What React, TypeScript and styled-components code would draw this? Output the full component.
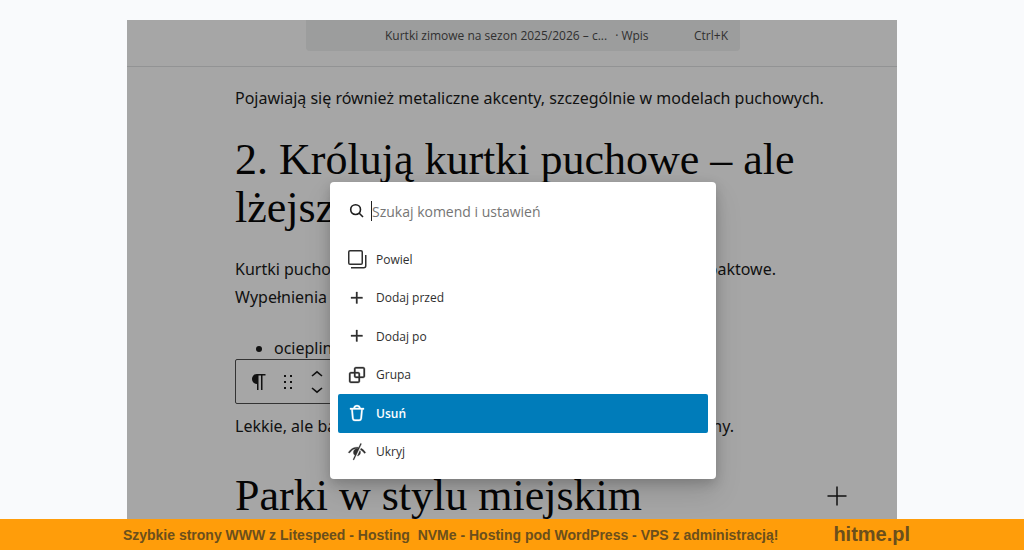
import React from "react";
import styled, { createGlobalStyle, css } from "styled-components";

const uiFont = '"Open Sans", "Noto Sans", sans-serif';
const contentFont = '"Noto Sans", "Open Sans", sans-serif';

const GlobalStyle = createGlobalStyle`
  *, *::before, *::after { box-sizing: border-box; }
  body { margin: 0; background: #f9fafc; font-family: ${uiFont}; }
  h2, h3, p, ul { margin: 0; padding: 0; font-weight: 400; }
  button, input { font: inherit; color: inherit; }
`;

const Page = styled.div`
  display: flex;
  flex-direction: column;
  height: 100vh;
  overflow: hidden;
`;

const Stage = styled.main`
  flex: 1;
  min-height: 0;
  display: flex;
  justify-content: center;
  padding-top: 20px;
`;

const Editor = styled.section`
  position: relative;
  width: 100%;
  max-width: 770px;
  overflow: hidden;
  background: #a6a6a6;
  color: #111;
`;

const TopBar = styled.header`
  display: flex;
  justify-content: center;
  align-items: flex-start;
  height: 47px;
  padding-left: 22px;
  border-bottom: 1px solid #929394;
`;

const DocumentButton = styled.button`
  display: flex;
  align-items: center;
  width: 434px;
  height: 31px;
  padding: 0 12px 0 79px;
  border: 0;
  border-radius: 0 0 4px 4px;
  background: #9c9d9d;
  color: #303030;
  font-size: 12px;
`;

const DocumentType = styled.span`
  margin-left: 8px;
`;

const Shortcut = styled.span`
  margin-left: auto;
`;

const Content = styled.article`
  padding: 17px 50px 0 108px;
  font-family: ${contentFont};
`;

const Paragraph = styled.p`
  font-size: 16px;
  line-height: 28px;
  white-space: nowrap;
`;

const SplitLine = styled.span<{ $width: number }>`
  display: flex;
  justify-content: space-between;
  max-width: ${(p) => p.$width}px;
`;

const headingText = css`
  color: #050505;
  font-family: "Liberation Serif", serif;
  font-size: 44px;
  line-height: 48px;
  white-space: nowrap;
`;

const Heading = styled.h2`
  ${headingText}
  margin: 24px 0 23px;
`;

const HeadingRow = styled.div`
  display: flex;
  align-items: center;
  justify-content: space-between;
  margin-top: 32px;
`;

const SubHeading = styled.h3`
  ${headingText}
`;

const Bullets = styled.ul`
  margin-top: 23px;
  padding-left: 39px;
  font-size: 16px;
  line-height: 28px;
`;

const BlockToolbar = styled.div`
  display: flex;
  align-items: center;
  width: 300px;
  height: 45px;
  margin: -3px 0 8px;
  padding-left: 11px;
  gap: 5px;
  border: 1px solid #333;
  border-radius: 2px;
`;

const IconButton = styled.button`
  display: flex;
  padding: 0;
  border: 0;
  background: none;
`;

const Movers = styled.div`
  display: flex;
  flex-direction: column;
`;

const Palette = styled.div`
  position: absolute;
  top: 162px;
  left: 203px;
  width: 386px;
  padding: 0 8px 8px;
  border-radius: 4px;
  background: #fff;
  color: #2f2f2f;
  box-shadow: 0 4px 12px rgba(0, 0, 0, 0.18), 0 14px 28px rgba(0, 0, 0, 0.12);
`;

const SearchField = styled.label`
  display: flex;
  align-items: center;
  gap: 2px;
  height: 58px;
  padding: 0 7px;
  color: #1e1e1e;
`;

const SearchInput = styled.input`
  flex: 1;
  height: 20px;
  padding: 0;
  border: 0;
  border-left: 1px solid #222;
  outline: 0;
  background: none;
  font-size: 14px;
  &::placeholder { color: #757575; opacity: 1; }
`;

const Commands = styled.ul`
  display: grid;
  grid-auto-rows: 1fr;
  height: 231px;
  list-style: none;
`;

const Command = styled.button<{ $active?: boolean }>`
  display: flex;
  align-items: center;
  gap: 7px;
  width: 100%;
  height: 100%;
  padding: 0 7px;
  border: 0;
  border-radius: 2px;
  background: ${(p) => (p.$active ? "#007cba" : "none")};
  color: ${(p) => (p.$active ? "#fff" : "#2f2f2f")};
  font-size: 12px;
  font-weight: ${(p) => (p.$active ? 600 : 400)};
`;

const Promo = styled.footer`
  display: flex;
  align-items: center;
  gap: 55px;
  height: 31px;
  padding-left: 12%;
  background: #ff9d0a;
  color: #6b4f1c;
  font-family: "Liberation Sans", sans-serif;
  font-weight: 700;
  white-space: pre;
`;

const PromoText = styled.span`
  font-size: 14px;
`;

const PromoLink = styled.a`
  color: inherit;
  font-size: 20px;
  text-decoration: none;
`;

const paths = {
  copy: "M5 4.5h11a.5.5 0 0 1 .5.5v11a.5.5 0 0 1-.5.5H5a.5.5 0 0 1-.5-.5V5a.5.5 0 0 1 .5-.5ZM3 5a2 2 0 0 1 2-2h11a2 2 0 0 1 2 2v11a2 2 0 0 1-2 2H5a2 2 0 0 1-2-2V5Zm17 3v10.75c0 .69-.56 1.25-1.25 1.25H6v1.5h12.75a2.75 2.75 0 0 0 2.75-2.75V8H20Z",
  plus: "M11 12.5V17.5H12.5V12.5H17.5V11H12.5V6H11V11H6V12.5H11Z",
  group: "M18 4h-7c-1.1 0-2 .9-2 2v3H6c-1.1 0-2 .9-2 2v7c0 1.1.9 2 2 2h7c1.1 0 2-.9 2-2v-3h3c1.1 0 2-.9 2-2V6c0-1.1-.9-2-2-2zm-4.5 14c0 .3-.2.5-.5.5H6c-.3 0-.5-.2-.5-.5v-7c0-.3.2-.5.5-.5h3V13c0 1.1.9 2 2 2h2.5v3zm0-4.5H11c-.3 0-.5-.2-.5-.5v-2.5H13c.3 0 .5.2.5.5v2.5zm5-.5c0 .3-.2.5-.5.5h-3V11c0-1.1-.9-2-2-2h-2.5V6c0-.3.2-.5.5-.5h7c.3 0 .5.2.5.5v7z",
  trash: "M12 5.5A2.25 2.25 0 0 0 9.878 7h4.244A2.251 2.251 0 0 0 12 5.5ZM12 4a3.751 3.751 0 0 0-3.675 3H5v1.5h1.27l.818 8.997a2.75 2.75 0 0 0 2.739 2.501h4.347a2.75 2.75 0 0 0 2.738-2.5L17.73 8.5H19V7h-3.325A3.751 3.751 0 0 0 12 4Zm4.224 4.5H7.776l.806 8.861a1.25 1.25 0 0 0 1.245 1.137h4.347a1.25 1.25 0 0 0 1.245-1.137l.805-8.861Z",
  hide: "M20.7 12.7s0-.1-.1-.2c0-.2-.2-.4-.4-.6-.3-.5-.9-1.2-1.6-1.8-.7-.6-1.5-1.3-2.6-1.8l-.6 1.4c.9.4 1.6 1 2.1 1.5.6.6 1.1 1.2 1.4 1.6.1.2.3.4.3.5v.1l.7-.3.7-.3Zm-5.2-9.3-1.8 4c-.5-.1-1.1-.2-1.7-.2-3 0-5.2 1.4-6.6 2.7-.7.7-1.2 1.3-1.6 1.8-.2.3-.3.5-.4.6 0 0 0 .1-.1.2s0 0 .7.3l.7.3V13c0-.1.2-.3.3-.5.3-.4.7-1 1.4-1.6 1.2-1.2 3-2.3 5.5-2.3H13v.3c-.4 0-.8-.1-1.1-.1-1.9 0-3.5 1.6-3.5 3.5s.6 2.3 1.6 2.9l-2 4.4.9.4 7.6-16.2-.9-.4Zm-3 12.6c1.7-.2 3-1.7 3-3.5s-.2-1.4-.6-1.9L12.4 16Z",
  pilcrow: "m9.996 14v-.225l.004 0v6.225h1.5v-14.5h2.5v14.5h1.5v-14.5h3v-1.5h-8.504c-2.761 0-5 2.239-5 5 0 2.761 2.239 5 5 5z",
  drag: "M8 7h2V5H8v2zm0 6h2v-2H8v2zm0 6h2v-2H8v2zm6-14v2h2V5h-2zm0 8h2v-2h-2v2zm0 6h2v-2h-2v2z",
};

type IconName = keyof typeof paths;

const outlined: IconName[] = ["hide", "trash", "group", "plus"];

function Icon({ name }: { name: IconName }) {
  return (
    <svg
      width="24"
      height="24"
      viewBox="0 0 24 24"
      fill="currentColor"
      stroke={outlined.includes(name) ? "currentColor" : "none"}
      strokeWidth="0.3"
      fillRule="evenodd"
      aria-hidden="true"
    >
      <path d={paths[name]} />
    </svg>
  );
}

function Chevron({ down = false }: { down?: boolean }) {
  return (
    <svg width="24" height="16" viewBox="0 0 24 16" fill="none" stroke="currentColor" strokeWidth="1.6" aria-hidden="true">
      <path d={down ? "M7 6l5 4.2L17 6" : "M7 10l5-4.2L17 10"} />
    </svg>
  );
}

const commands: { label: string; icon: IconName; active?: boolean }[] = [
  { label: "Powiel", icon: "copy" },
  { label: "Dodaj przed", icon: "plus" },
  { label: "Dodaj po", icon: "plus" },
  { label: "Grupa", icon: "group" },
  { label: "Usuń", icon: "trash", active: true },
  { label: "Ukryj", icon: "hide" },
];

export default function App() {
  return (
    <Page>
      <GlobalStyle />
      <Stage>
        <Editor>
          <TopBar>
            <DocumentButton>
              <span>Kurtki zimowe na sezon 2025/2026 – c...</span>
              <DocumentType>· Wpis</DocumentType>
              <Shortcut>Ctrl+K</Shortcut>
            </DocumentButton>
          </TopBar>
          <Content>
            <Paragraph>Pojawiają się również metaliczne akcenty, szczególnie w modelach puchowych.</Paragraph>
            <Heading>
              2. Królują kurtki puchowe – ale
              <br />
              lżejsze
            </Heading>
            <Paragraph>
              <SplitLine $width={541}>
                <span>Kurtki puchowe</span>
                <span>kompaktowe.</span>
              </SplitLine>
              Wypełnienia
            </Paragraph>
            <Bullets>
              <li>ociepliny</li>
            </Bullets>
            <BlockToolbar role="toolbar">
              <IconButton aria-label="Akapit"><Icon name="pilcrow" /></IconButton>
              <IconButton aria-label="Przeciągnij"><Icon name="drag" /></IconButton>
              <Movers>
                <IconButton aria-label="W górę"><Chevron /></IconButton>
                <IconButton aria-label="W dół"><Chevron down /></IconButton>
              </Movers>
            </BlockToolbar>
            <Paragraph>
              <SplitLine $width={499}>
                <span>Lekkie, ale bardzo</span>
                <span>ny.</span>
              </SplitLine>
            </Paragraph>
            <HeadingRow>
              <SubHeading>Parki w stylu miejskim</SubHeading>
              <IconButton aria-label="Dodaj blok">
                <svg width="20" height="20" viewBox="0 0 20 20" fill="none" stroke="currentColor" strokeWidth="1.5" aria-hidden="true">
                  <path d="M10 .5v19M.5 10h19" />
                </svg>
              </IconButton>
            </HeadingRow>
          </Content>
          <Palette role="dialog" aria-label="Paleta poleceń">
            <SearchField>
              <svg width="24" height="24" viewBox="0 0 24 24" fill="none" stroke="currentColor" strokeWidth="1.6" aria-hidden="true">
                <circle cx="10.6" cy="10.6" r="4.9" />
                <path d="M14 14l4 4" />
              </svg>
              <SearchInput aria-label="Szukaj komend i ustawień" placeholder="Szukaj komend i ustawień" />
            </SearchField>
            <Commands>
              {commands.map((c) => (
                <li key={c.label}>
                  <Command $active={c.active}>
                    <Icon name={c.icon} />
                    {c.label}
                  </Command>
                </li>
              ))}
            </Commands>
          </Palette>
        </Editor>
      </Stage>
      <Promo>
        <PromoText>Szybkie strony WWW z Litespeed - Hosting  NVMe - Hosting pod WordPress - VPS z administracją!</PromoText>
        <PromoLink href="#">hitme.pl</PromoLink>
      </Promo>
    </Page>
  );
}
